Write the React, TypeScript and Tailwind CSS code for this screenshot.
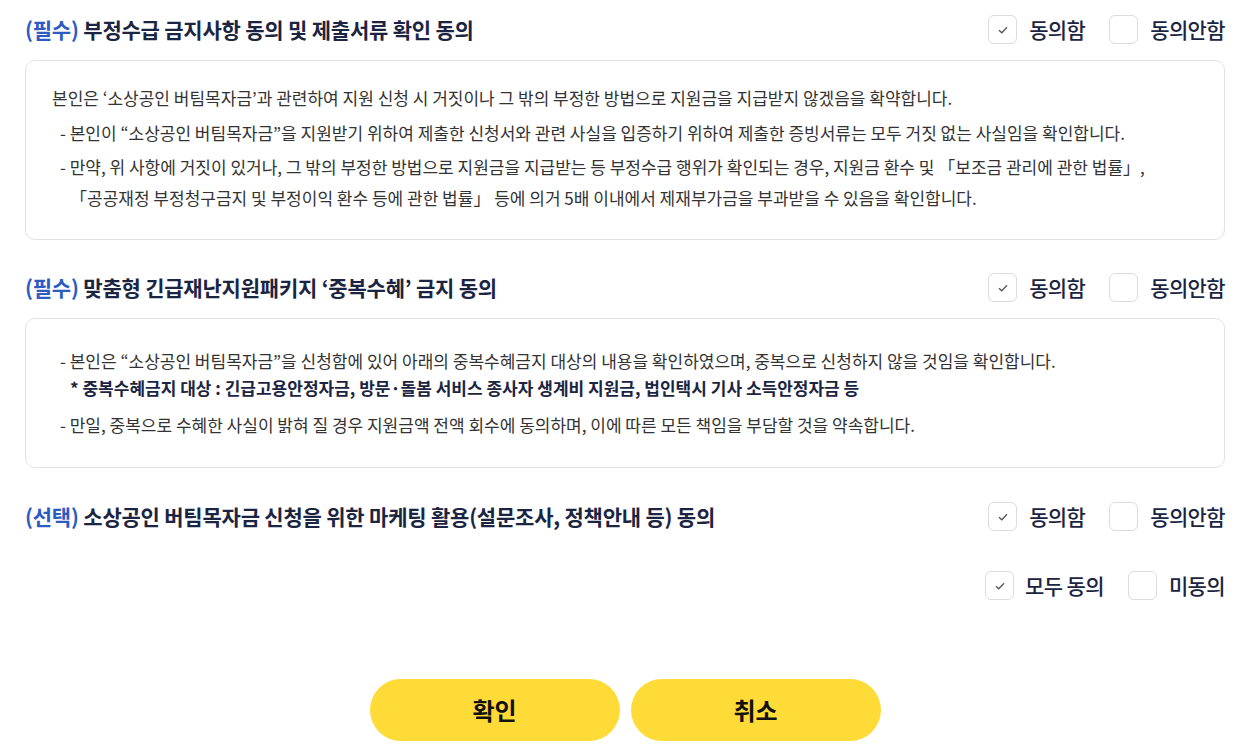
import { useState } from "react"

const font = { fontFamily: '"Noto Sans CJK KR", "Noto Sans", sans-serif' }

function CheckBox({ checked, label, onClick, gap = "gap-3" }: { checked: boolean; label: string; onClick: () => void; gap?: string }) {
  return (
    <button type="button" onClick={onClick} className={`flex h-[29px] items-center ${gap}`}>
      <span className="flex h-[29px] w-[29px] items-center justify-center rounded-[6px] border border-[#dcdcdc] bg-white">
        {checked && (
          <svg width="10" height="8" viewBox="0 0 10 8" fill="none">
            <path d="M1 4.2L3.8 6.8L9 1.2" stroke="#555" strokeWidth="1.3" />
          </svg>
        )}
      </span>
      <span className="text-[21px] font-medium leading-[29px] tracking-[-0.03em] text-[#1b2542]">{label}</span>
    </button>
  )
}

function AgreeRow({ tag, title }: { tag: string; title: string }) {
  const [agree, setAgree] = useState(true)
  return (
    <div className="flex h-[29px] items-center justify-between">
      <h2 className="text-[21px] font-semibold tracking-[-0.01em] text-[#1b2542]">
        <span className="text-[#2c5bc4]">({tag})</span> {title}
      </h2>
      <div className="flex items-center gap-6">
        <CheckBox checked={agree} label="동의함" onClick={() => setAgree(true)} />
        <CheckBox checked={!agree} label="동의안함" onClick={() => setAgree(false)} />
      </div>
    </div>
  )
}

export default function App() {
  const [all, setAll] = useState(true)

  return (
    <div className="min-h-screen bg-white pl-[25px] pr-[30px] pt-[15px] pb-1 text-[#333]" style={font}>
      {/* 부정수급 */}
      <AgreeRow tag="필수" title="부정수급 금지사항 동의 및 제출서류 확인 동의" />
      <div className="mt-4 rounded-[10px] border border-[#e2e2e2] pl-[26px] pr-6 pt-[21px] pb-[26px] text-[17px] leading-[31px] text-[#333]">
        <p>본인은 ‘소상공인 버팀목자금’과 관련하여 지원 신청 시 거짓이나 그 밖의 부정한 방법으로 지원금을 지급받지 않겠음을 확약합니다.</p>
        <p className="mt-1 pl-2">- 본인이 “소상공인 버팀목자금”을 지원받기 위하여 제출한 신청서와 관련 사실을 입증하기 위하여 제출한 증빙서류는 모두 거짓 없는 사실임을 확인합니다.</p>
        <p className="mt-[3px] pl-2">
          - 만약, 위 사항에 거짓이 있거나, 그 밖의 부정한 방법으로 지원금을 지급받는 등 부정수급 행위가 확인되는 경우, 지원금 환수 및 「보조금 관리에 관한 법률」,
          <br />
          <span className="pl-[10px]">「공공재정 부정청구금지 및 부정이익 환수 등에 관한 법률」 등에 의거 5배 이내에서 제재부가금을 부과받을 수 있음을 확인합니다.</span>
        </p>
      </div>

      {/* 중복수혜 */}
      <div className="mt-[33px]">
        <AgreeRow tag="필수" title="맞춤형 긴급재난지원패키지 ‘중복수혜’ 금지 동의" />
      </div>
      <div className="mt-4 rounded-[10px] border border-[#e2e2e2] pl-[26px] pr-6 pt-[28px] pb-[29px] text-[17px] text-[#333]">
        <p className="pl-2 leading-[27px]">
          - 본인은 “소상공인 버팀목자금”을 신청함에 있어 아래의 중복수혜금지 대상의 내용을 확인하였으며, 중복으로 신청하지 않을 것임을 확인합니다.
          <br />
          <span className="pl-[10px] font-semibold text-[#1b2542]">* 중복수혜금지 대상 : 긴급고용안정자금, 방문·돌봄 서비스 종사자 생계비 지원금, 법인택시 기사 소득안정자금 등</span>
        </p>
        <p className="mt-[10px] pl-2 leading-[27px]">- 만일, 중복으로 수혜한 사실이 밝혀 질 경우 지원금액 전액 회수에 동의하며, 이에 따른 모든 책임을 부담할 것을 약속합니다.</p>
      </div>

      {/* 마케팅 */}
      <div className="mt-[34px]">
        <AgreeRow tag="선택" title="소상공인 버팀목자금 신청을 위한 마케팅 활용(설문조사, 정책안내 등) 동의" />
      </div>

      {/* 전체 */}
      <div className="mt-[40px] flex h-[29px] items-center justify-end gap-6">
        <CheckBox checked={all} label="모두 동의" onClick={() => setAll(true)} gap="gap-[11px]" />
        <CheckBox checked={!all} label="미동의" onClick={() => setAll(false)} />
      </div>

      <div className="mt-[79px] flex justify-center gap-[11px]">
        <button type="button" className="h-[62px] w-[250px] rounded-full bg-[#ffdb37] text-[24px] font-bold text-[#111]">확인</button>
        <button type="button" className="h-[62px] w-[250px] rounded-full bg-[#ffdb37] text-[24px] font-bold text-[#111]">취소</button>
      </div>
    </div>
  )
}
